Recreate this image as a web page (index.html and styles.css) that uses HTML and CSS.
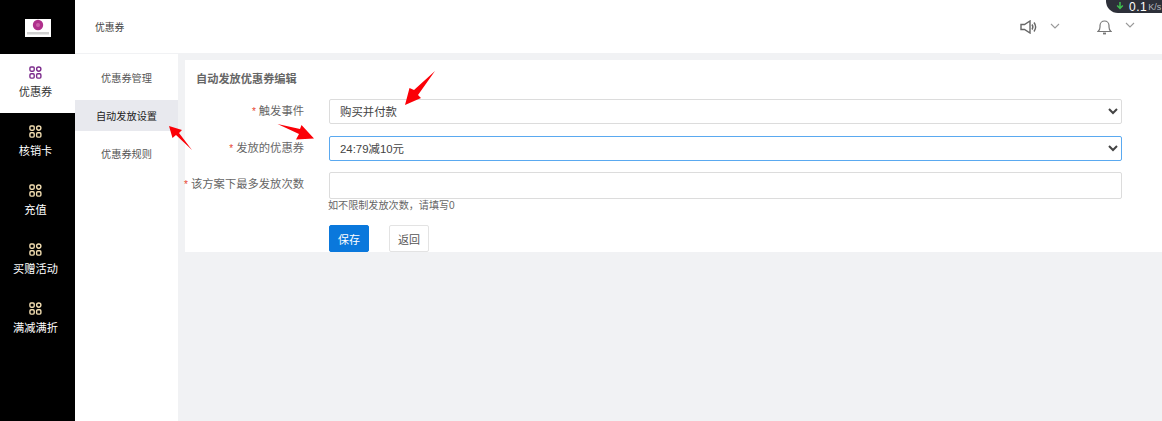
FILE: index.html
```html
<!DOCTYPE html>
<html lang="zh-CN">
<head>
<meta charset="utf-8">
<title>优惠券</title>
<link rel="stylesheet" href="styles.css">
</head>
<body>
<div class="app">
  <aside class="sidebar">
    <div class="logo">
      <svg class="logo-img" viewBox="0 0 26 18" width="26" height="18">
        <rect width="26" height="18" fill="#fff"/>
        <circle cx="13" cy="6" r="5.200" fill="#b0308c"/>
        <circle cx="13" cy="6" r="2" fill="#c860a8"/>
        <rect x="2" y="13" width="22" height="2.500" fill="#d0d0d0"/>
      </svg>
    </div>
    <nav class="menu">
      <a class="menu-item active"><svg class="mi" viewBox="0 0 14 14"><rect x="1" y="1" width="4.6" height="4.6" rx="1.2"/><rect x="8.2" y="1" width="4.6" height="4.6" rx="2.3"/><rect x="1" y="8.4" width="4.6" height="4.6" rx="1.2"/><rect x="8.2" y="8.4" width="4.6" height="4.6" rx="1.2"/></svg><span>优惠券</span></a>
      <a class="menu-item"><svg class="mi" viewBox="0 0 14 14"><rect x="1" y="1" width="4.6" height="4.6" rx="1.2"/><rect x="8.2" y="1" width="4.6" height="4.6" rx="2.3"/><rect x="1" y="8.4" width="4.6" height="4.6" rx="1.2"/><rect x="8.2" y="8.4" width="4.6" height="4.6" rx="1.2"/></svg><span>核销卡</span></a>
      <a class="menu-item"><svg class="mi" viewBox="0 0 14 14"><rect x="1" y="1" width="4.6" height="4.6" rx="1.2"/><rect x="8.2" y="1" width="4.6" height="4.6" rx="2.3"/><rect x="1" y="8.4" width="4.6" height="4.6" rx="1.2"/><rect x="8.2" y="8.4" width="4.6" height="4.6" rx="1.2"/></svg><span>充值</span></a>
      <a class="menu-item"><svg class="mi" viewBox="0 0 14 14"><rect x="1" y="1" width="4.6" height="4.6" rx="1.2"/><rect x="8.2" y="1" width="4.6" height="4.6" rx="2.3"/><rect x="1" y="8.4" width="4.6" height="4.6" rx="1.2"/><rect x="8.2" y="8.4" width="4.6" height="4.6" rx="1.2"/></svg><span>买赠活动</span></a>
      <a class="menu-item"><svg class="mi" viewBox="0 0 14 14"><rect x="1" y="1" width="4.6" height="4.6" rx="1.2"/><rect x="8.2" y="1" width="4.6" height="4.6" rx="2.3"/><rect x="1" y="8.4" width="4.6" height="4.6" rx="1.2"/><rect x="8.2" y="8.4" width="4.6" height="4.6" rx="1.2"/></svg><span>满减满折</span></a>
    </nav>
  </aside>
  <div class="main">
    <header class="topbar">
      <div class="page-title">优惠券</div>
      <div class="tools">
        <svg class="speaker" viewBox="0 0 17 14" width="17" height="14"><path d="M1 4.5h3.5L10 1v12L4.5 9.5H1z"/><path d="M12 4.5c1 1.400 1 3.600 0 5"/><path d="M14 2.500c1.900 2.600 1.900 6.400 0 9"/></svg>
        <svg class="chev chev-a" viewBox="0 0 10 6" width="10" height="6"><path d="M1 1l4 4 4-4"/></svg>
        <svg class="bell" viewBox="0 0 15 16" width="15" height="16"><path d="M1 12.500c1.400-1 2-2 2-4.500V6.500a4.500 4.500 0 0 1 9 0V8c0 2.500.6 3.500 2 4.500z"/><path d="M6 14.500h3" class="bell-foot"/></svg>
        <svg class="chev chev-b" viewBox="0 0 10 6" width="10" height="6"><path d="M1 1l4 4 4-4"/></svg>
      </div>
    </header>
    <div class="body-row">
      <nav class="subnav">
        <a class="sub-item">优惠券管理</a>
        <a class="sub-item current">自动发放设置</a>
        <a class="sub-item">优惠券规则</a>
      </nav>
      <section class="card">
        <h2 class="card-title">自动发放优惠券编辑</h2>
        <form class="form">
          <label class="lbl"><i>*</i>触发事件</label>
          <select class="ctl sel"><option>购买并付款</option></select>
          <label class="lbl"><i>*</i>发放的优惠券</label>
          <select class="ctl sel focus"><option>24:79减10元</option></select>
          <label class="lbl lbl-inp"><i>*</i>该方案下最多发放次数</label>
          <div class="field">
            <input class="ctl inp" type="text">
            <p class="hint">如不限制发放次数，请填写0</p>
          </div>
          <div class="actions">
            <button class="btn primary" type="button">保存</button>
            <button class="btn" type="button">返回</button>
          </div>
        </form>
      </section>
    </div>
  </div>
</div>
<div class="speed"><svg viewBox="0 0 8 8" width="8" height="8"><path d="M4 0v6M1.200 3.500L4 6.500l2.800-3"/></svg><b>0.1</b><small>K/s</small></div>
<svg class="arrows" viewBox="0 0 1162 421" width="1162" height="421">
  <polygon points="435,71 414,90 409.500,88 405,105 421,98 418,95"/>
  <polygon points="277.500,124 300,129 301.500,125 314,138.500 296,139.500 299,134"/>
  <polygon points="192,150 179,133 182,130 169,126 172.500,138 176,135"/>
</svg>
</body>
</html>
```
FILE: styles.css
```css
* { box-sizing: border-box; }
html, body { margin: 0; height: 100%; overflow: hidden; }
body {
  background: #f1f2f4;
  color: #333;
  font-family: "Liberation Sans", "Noto Sans CJK SC", sans-serif;
  font-size: 11px;
}
.app { display: flex; height: 421px; }

.sidebar { width: 75px; flex: none; background: #000; }
.logo { height: 54px; display: flex; justify-content: center; padding-top: 19px; }
.logo-img { display: block; }
.menu { display: flex; flex-direction: column; }
.menu-item {
  height: 59px;
  display: flex;
  flex-direction: column;
  align-items: center;
  padding: 12px 4px 0 0;
  color: #fff;
  font-size: 11.2px;
  line-height: 16px;
}
.menu-item.active { background: #fff; color: #333; }
.mi { width: 13px; height: 13px; margin-bottom: 5px; fill: none; stroke: #f2ddb0; stroke-width: 1.5; }
.active .mi { stroke: #7c2c8c; }

.main { flex: 1; min-width: 0; display: flex; flex-direction: column; }
.topbar {
  height: 54px;
  background: #fff;
  display: flex;
  align-items: center;
  justify-content: space-between;
  padding: 0 27px 0 20px;
  position: relative;
}
.topbar::after {
  content: "";
  position: absolute;
  left: 0;
  bottom: 0;
  width: 925px;
  height: 1px;
  background: #f1f2f4;
}
.page-title { font-size: 9.8px; color: #444; margin-top: -1px; }
.tools { display: flex; align-items: flex-start; height: 18px; }
.speaker { margin-top: 2px; fill: none; stroke: #666; stroke-width: 1.4; }
.chev { fill: none; stroke: #999; stroke-width: 1.1; }
.chev-a { margin: 5px 0 0 13px; }
.bell { margin: 1px 0 0 37px; fill: none; stroke: #777; stroke-width: 1.2; }
.bell-foot { stroke-width: 1.8; }
.chev-b { margin: 4px 0 0 13px; }

.body-row { flex: 1; display: flex; align-items: flex-start; gap: 7px; }
.subnav {
  width: 103px;
  flex: none;
  align-self: stretch;
  background: #fff;
  padding-top: 8px;
  display: flex;
  flex-direction: column;
  gap: 7px;
}
.sub-item {
  height: 31px;
  padding-bottom: 1px;
  display: flex;
  align-items: center;
  justify-content: center;
  font-size: 10.2px;
  color: #555;
}
.sub-item.current { background: #e8e9ee; color: #222; }

.card { flex: 1; min-width: 0; margin-top: 6px; background: #fff; }
.card-title {
  margin: 0;
  padding: 11px 0 0 11px;
  height: 39px;
  font-size: 11.2px;
  line-height: 16px;
  font-weight: 700;
  color: #666;
}
.form {
  display: grid;
  grid-template-columns: 119px 793px;
  column-gap: 25px;
  row-gap: 12px;
  align-items: start;
}
.lbl {
  display: flex;
  justify-content: flex-end;
  white-space: nowrap;
  padding-top: 4px;
  font-size: 11.3px;
  line-height: 16px;
  color: #666;
}
.lbl-inp { margin-top: -1px; }
.lbl i { color: #e8432e; font-style: normal; margin: 1px 3px 0 0; font-size: 10px; }
.ctl {
  display: block;
  width: 100%;
  border: 1px solid #dcdcdc;
  border-radius: 2px;
  background: #fff;
  color: #444;
  font: inherit;
  font-size: 11.4px;
  outline: none;
}
.sel { height: 25px; padding: 0 6px; }
.sel.focus { border-color: #5aa9f0; }
.field { margin-top: -1px; }
.inp { height: 27px; }
.hint { margin: 0 0 0 -1px; font-size: 10.1px; line-height: 14px; color: #666; }
.actions { grid-column: 2; display: flex; gap: 20px; }
.btn {
  width: 40px;
  height: 27px;
  padding: 0;
  border: 1px solid #e3e3e3;
  border-radius: 2px;
  background: #fff;
  color: #555;
  font: inherit;
  font-size: 11px;
}
.btn.primary { background: #0a78dc; border-color: #0a78dc; color: #fff; }

.speed {
  position: absolute;
  top: 0;
  right: 0;
  width: 56px;
  height: 13px;
  background: #2d3039;
  border-bottom-left-radius: 12px;
  display: flex;
  align-items: flex-end;
  padding-left: 10px;
  color: #fff;
  line-height: 12px;
}
.speed svg { fill: none; stroke: #3fbf4f; stroke-width: 1.5; margin: 0 5px 3px 0; flex: none; }
.speed b { font-weight: 400; font-size: 12px; letter-spacing: .5px; }
.speed small { font-size: 9px; color: #b5b8bf; margin-left: 1px; }

.arrows { position: absolute; top: 0; left: 0; pointer-events: none; }
.arrows polygon { fill: #fb0007; }
```
